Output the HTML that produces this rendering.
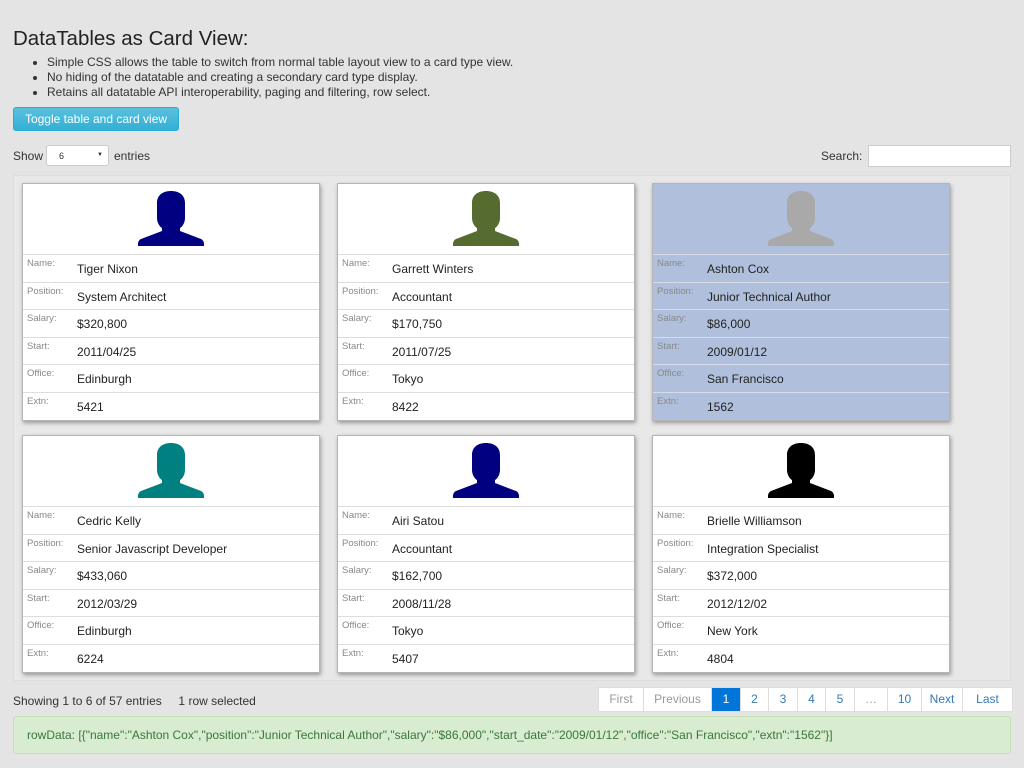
<!DOCTYPE html>
<html><head><style>
body{margin:0;background:#e4e4e4;font-family:"Liberation Sans",sans-serif;color:#333;width:1024px;height:768px;overflow:hidden;position:relative}
h1{position:absolute;left:13px;top:27px;margin:0;font-size:20.5px;font-weight:normal;color:#222}
ul{position:absolute;left:13px;top:55px;margin:0;padding-left:34px;font-size:12px;line-height:15px;color:#333}
.btn{position:absolute;left:13px;top:107px;width:166px;height:24px;background:linear-gradient(#5bc0de,#31b0d5);border:1px solid #2aabd2;border-radius:3px;color:#fff;font-size:12px;text-align:center;line-height:22px;box-sizing:border-box}
.show{position:absolute;left:13px;top:149px;font-size:12px}
.sel{position:absolute;left:46px;top:145px;width:63px;height:21px;background:#fff;border:1px solid #ccc;border-radius:3px;box-sizing:border-box;font-size:9px;padding:5px 12px}
.sel:after{content:"▼";position:absolute;right:5px;top:6px;font-size:6px}
.ent{position:absolute;left:114px;top:149px;font-size:12px}
.search{position:absolute;left:821px;top:149px;font-size:12px}
.sbox{position:absolute;left:868px;top:145px;width:143px;height:22px;background:#fff;border:1px solid #ccc;box-sizing:border-box}
.panel{position:absolute;left:13px;top:175px;width:998px;height:506px;background:#e8e8e8;border:1px solid #ddd;box-sizing:border-box}
.card{position:absolute;width:298px;height:238px;background:#fff;border:1px solid #b5b5b5;box-sizing:border-box;box-shadow:1px 2px 4px rgba(0,0,0,.35);overflow:hidden}
.card.s{background:#b0c0dc}
.img{height:71px;box-sizing:border-box;border-bottom:1px solid #ddd;position:relative}
.img svg{position:absolute;left:115px;top:6px}
.row{height:27.6px;box-sizing:border-box;border-bottom:1px solid #ddd;position:relative}
.card.s .row,.card.s .img{border-color:#d6dde9}
.row:last-child{border-bottom:none}
.l{position:absolute;left:4px;top:3px;font-size:9.5px;color:#888}
.v{position:absolute;left:54px;top:7px;font-size:12px;color:#222}
.info{position:absolute;left:13px;top:694px;font-size:12px}
.pg{position:absolute;left:598px;top:687px;display:flex;height:25px;background:#fff;border:1px solid #ddd;box-sizing:border-box;font-size:12px}
.pg span{text-align:center;line-height:23px;border-right:1px solid #ddd;color:#337ab7;box-sizing:border-box}
.pg span.g{color:#999}
.pg span.a{background:#0275d8;color:#fff}
.alert{position:absolute;left:13px;top:716px;width:998px;height:38px;background:#d7ecd0;border:1px solid #c3e0b6;border-radius:3px;box-sizing:border-box;color:#3c763d;font-size:12px;line-height:36px;padding-left:13px}
</style></head><body>
<h1>DataTables as Card View:</h1>
<ul><li>Simple CSS allows the table to switch from normal table layout view to a card type view.</li><li>No hiding of the datatable and creating a secondary card type display.</li><li>Retains all datatable API interoperability, paging and filtering, row select.</li></ul>
<div class="btn">Toggle table and card view</div>
<div class="show">Show</div><div class="sel">6</div><div class="ent">entries</div>
<div class="search">Search:</div><div class="sbox"></div>
<div class="panel"></div>
<div id="cards"></div>
<div class="info">Showing 1 to 6 of 57 entries &nbsp;&nbsp;&nbsp;&nbsp;1 row selected</div>
<div class="pg"><span class="g" style="width:45px">First</span><span class="g" style="width:68px">Previous</span><span class="a" style="width:29px">1</span><span style="width:28px">2</span><span style="width:29px">3</span><span style="width:28px">4</span><span style="width:29px">5</span><span class="g" style="width:33px">…</span><span style="width:34px">10</span><span style="width:41px">Next</span><span style="width:49px;border:none">Last</span></div>
<div class="alert">rowData: [{"name":"Ashton Cox","position":"Junior Technical Author","salary":"$86,000","start_date":"2009/01/12","office":"San Francisco","extn":"1562"}]</div>
<script>
var d=[["Tiger Nixon","System Architect","$320,800","2011/04/25","Edinburgh","5421","#000080"],
["Garrett Winters","Accountant","$170,750","2011/07/25","Tokyo","8422","#556b2f"],
["Ashton Cox","Junior Technical Author","$86,000","2009/01/12","San Francisco","1562","#a9a9a9"],
["Cedric Kelly","Senior Javascript Developer","$433,060","2012/03/29","Edinburgh","6224","#008080"],
["Airi Satou","Accountant","$162,700","2008/11/28","Tokyo","5407","#000080"],
["Brielle Williamson","Integration Specialist","$372,000","2012/12/02","New York","4804","#000"]];
var L=["Name:","Position:","Salary:","Start:","Office:","Extn:"],h="";
d.forEach(function(r,i){var x=22+(i%3)*315,y=183+Math.floor(i/3)*252;
h+='<div class="card'+(i==2?' s':'')+'" style="left:'+x+'px;top:'+y+'px"><div class="img"><svg width="66" height="56" viewBox="0 0 66 56"><path fill="'+r[6]+'" d="M33 1C25 1 19 5 19 13V28C19 33 22 37 24 38V41L3 49C1 50 0 52 0 54V56H66V54C66 52 65 50 63 49L42 41V38C44 37 47 33 47 28V13C47 5 41 1 33 1Z"/></svg></div>';
for(var k=0;k<6;k++)h+='<div class="row"><span class="l">'+L[k]+'</span><span class="v">'+r[k]+'</span></div>';
h+='</div>';});
document.getElementById("cards").innerHTML=h;
</script>
</body></html>
